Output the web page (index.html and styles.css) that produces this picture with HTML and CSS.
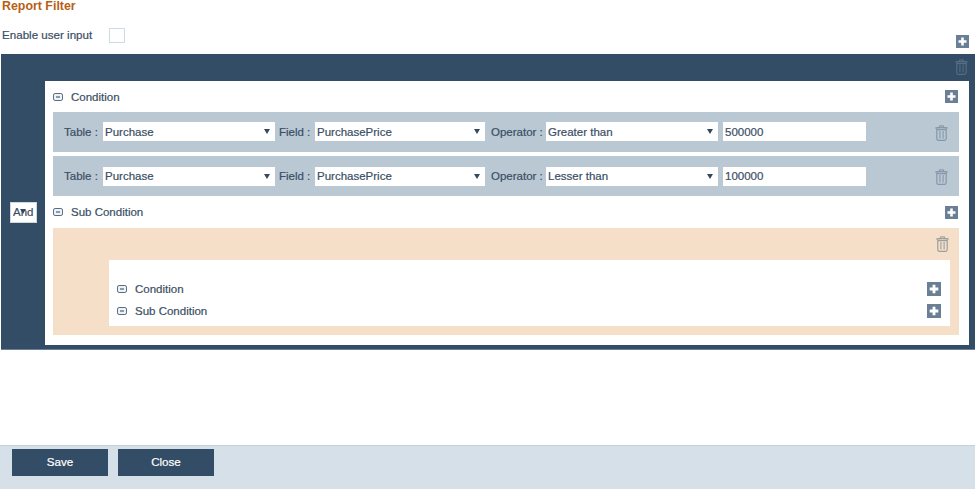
FILE: index.html
```html
<!DOCTYPE html>
<html lang="en">
<head>
<meta charset="utf-8">
<title>Report Filter</title>
<link rel="stylesheet" href="styles.css">
</head>
<body>
<svg class="defs" width="0" height="0" aria-hidden="true">
  <symbol id="plus" viewBox="0 0 13 13">
    <rect width="13" height="13" fill="#6a7f95"/>
    <path d="M6.5 2.5v8M2.5 6.5h8" stroke="#fff" stroke-width="2.6" fill="none"/>
  </symbol>
  <symbol id="minus" viewBox="0 0 10 8">
    <rect x=".5" y=".5" width="9" height="7" rx="1.6" fill="#eef2f5" stroke="#566c82" stroke-width="1"/>
    <path d="M3 4h4" stroke="#4a6076" stroke-width="1.2"/>
  </symbol>
  <symbol id="trash" viewBox="0 0 13 16">
    <path d="M4.5 2V.8h4V2" fill="none" stroke="currentColor" stroke-width="1"/>
    <path d="M.4 3.4C2 2.2 11 2.2 12.6 3.4" fill="none" stroke="currentColor" stroke-width="1.6"/>
    <path d="M1.8 4.6h9.4v9c0 1-.6 1.8-1.6 1.8H3.4c-1 0-1.6-.8-1.6-1.8z" fill="none" stroke="currentColor" stroke-width="1.2"/>
    <path d="M4.9 6v7.6M8.1 6v7.6" stroke="currentColor" stroke-width="1.1"/>
  </symbol>
</svg>
<div class="page">
  <main class="main">
    <h1 class="title">Report Filter</h1>
    <div class="enable">
      <span class="enable-label">Enable user input</span>
      <span class="checkbox"></span>
      <svg class="plus plus-top"><use href="#plus"/></svg>
    </div>
    <section class="panel">
      <div class="panel-head"><svg class="trash trash-dark"><use href="#trash"/></svg></div>
      <div class="panel-body">
        <div class="logic">
          <span class="select-wrap logic-wrap">
            <select class="logic-select"><option>And</option></select>
          </span>
        </div>
        <div class="tree">
          <div class="head head-top">
            <svg class="minus"><use href="#minus"/></svg>
            <span class="head-text">Condition</span>
            <svg class="plus"><use href="#plus"/></svg>
          </div>
          <div class="row row-first">
            <label class="lbl lbl-table">Table :</label>
            <span class="select-wrap w-table"><select class="sel"><option>Purchase</option></select></span>
            <label class="lbl lbl-field">Field :</label>
            <span class="select-wrap w-field"><select class="sel"><option>PurchasePrice</option></select></span>
            <label class="lbl lbl-op">Operator :</label>
            <span class="select-wrap w-op"><select class="sel"><option>Greater than</option></select></span>
            <input class="val" value="500000">
            <svg class="trash trash-row"><use href="#trash"/></svg>
          </div>
          <div class="row">
            <label class="lbl lbl-table">Table :</label>
            <span class="select-wrap w-table"><select class="sel"><option>Purchase</option></select></span>
            <label class="lbl lbl-field">Field :</label>
            <span class="select-wrap w-field"><select class="sel"><option>PurchasePrice</option></select></span>
            <label class="lbl lbl-op">Operator :</label>
            <span class="select-wrap w-op"><select class="sel"><option>Lesser than</option></select></span>
            <input class="val" value="100000">
            <svg class="trash trash-row"><use href="#trash"/></svg>
          </div>
          <div class="head head-sub">
            <svg class="minus"><use href="#minus"/></svg>
            <span class="head-text">Sub Condition</span>
            <svg class="plus"><use href="#plus"/></svg>
          </div>
          <div class="sub">
            <div class="sub-head"><svg class="trash trash-sub"><use href="#trash"/></svg></div>
            <div class="sub-inner">
              <div class="head head-inner">
                <svg class="minus"><use href="#minus"/></svg>
                <span class="head-text">Condition</span>
                <svg class="plus"><use href="#plus"/></svg>
              </div>
              <div class="head head-inner">
                <svg class="minus"><use href="#minus"/></svg>
                <span class="head-text">Sub Condition</span>
                <svg class="plus"><use href="#plus"/></svg>
              </div>
            </div>
          </div>
        </div>
      </div>
    </section>
  </main>
  <footer class="footer">
    <button class="btn">Save</button>
    <button class="btn">Close</button>
  </footer>
</div>
</body>
</html>
```
FILE: styles.css
```css
* { box-sizing: border-box; }
html, body { margin: 0; padding: 0; background: #fff; }
body {
  font-family: "Liberation Sans", Arial, sans-serif;
  font-size: 11.5px;
  color: #3a4e64;
  -webkit-text-stroke: 0.2px #3a4e64;
  overflow: hidden;
}
.defs { display: block; height: 0; }
.page { display: flex; flex-direction: column; height: 489px; }
.main { flex: 1; min-height: 0; }

.title {
  margin: 0;
  padding-left: 2px;
  height: 13px;
  font-size: 12.4px;
  line-height: 12px;
  font-weight: 700;
  color: #b85f17;
  -webkit-text-stroke: 0;
}
.enable {
  display: flex;
  align-items: flex-start;
  height: 26px;
  margin-top: 15px;
  padding: 0 6px 0 2px;
}
.enable-label { width: 107px; font-size: 11.6px; line-height: 14px; }
.checkbox {
  width: 16px;
  height: 15px;
  background: #fff;
  border: 1px solid #cfdae3;
}
.plus-top { margin: 7px 0 0 auto; }
.plus { display: block; width: 13px; height: 13px; flex: none; }
.minus { display: block; width: 10px; height: 8px; flex: none; }
.trash { display: block; width: 13px; height: 16px; flex: none; }
.trash-dark { color: #566d82; }
.trash-row { color: #8597a8; }
.trash-sub { color: #9c9fa0; }

.panel {
  margin-left: 1px;
  height: 296px;
  background: #334d66;
  border-bottom: 1px solid #6d8093;
  display: flex;
  flex-direction: column;
}
.panel-head {
  height: 27px;
  flex: none;
  display: flex;
  justify-content: flex-end;
  padding: 5px 7px 0 0;
}
.panel-body { display: flex; height: 264px; margin-right: 6px; }
.logic {
  width: 44px;
  flex: none;
  display: flex;
  align-items: center;
  padding-left: 9px;
  padding-bottom: 2px;
}
.select-wrap { position: relative; display: block; flex: none; }
.select-wrap::after {
  content: "";
  position: absolute;
  right: 5px;
  top: 7px;
  border-left: 3px solid transparent;
  border-right: 3px solid transparent;
  border-top: 5px solid #34495e;
}
.logic-wrap { width: 27px; height: 21px; }
.logic-wrap::after { right: 11px; top: 7px; }
.logic-select, .sel {
  appearance: none;
  -webkit-appearance: none;
  display: block;
  width: 100%;
  height: 100%;
  margin: 0;
  background: #fff;
  font: inherit;
  color: inherit;
  outline: none;
}
.logic-select {
  border: 1px solid #cfd8e0;
  border-radius: 0;
  padding: 0 0 0 2px;
}
.sel { border: 0; border-radius: 0; padding: 0 0 0 2px; }

.tree { flex: 1; background: #fff; padding: 0 10px 10px 8px; }
.head {
  display: flex;
  align-items: center;
}
.head-text { flex: 1; margin-left: 8px; }
.head-top { height: 31px; }
.head-sub { height: 32px; }
.head .plus { margin-right: 1px; }

.row {
  height: 40px;
  margin-bottom: 4px;
  background: #b9c8d3;
  display: flex;
  align-items: center;
  padding-left: 11px;
}
.row-first { padding-bottom: 1px; }
.row + .head-sub { margin-top: -4px; }
.lbl { flex: none; }
.lbl-table { width: 39px; }
.lbl-field { width: 36px; margin-left: 4px; }
.lbl-op { width: 55px; margin-left: 6px; }
.w-table, .w-field, .w-op { height: 19px; }
.w-table { width: 172px; }
.w-field { width: 170px; }
.w-op { width: 172px; }
.val {
  flex: none;
  width: 143px;
  height: 19px;
  margin: 0 0 0 5px;
  padding: 0 0 0 2px;
  border: 0;
  border-radius: 0;
  background: #fff;
  font: inherit;
  color: inherit;
  outline: none;
}
.trash-row { margin-left: 69px; margin-top: 2px; }

.sub { height: 107px; background: #f6dfc8; padding: 0 9px 9px 56px; }
.sub-head {
  height: 32px;
  display: flex;
  justify-content: flex-end;
  padding: 8px 1px 0 0;
}
.sub-inner { height: 66px; background: #fff; padding: 18px 8px 0 8px; }
.head-inner { height: 22px; }
.head-inner .plus { width: 14px; height: 14px; }

.footer {
  flex: none;
  height: 44px;
  background: #d5e0e8;
  border-top: 1px solid #c3d1dc;
  display: flex;
  gap: 10px;
  padding: 3px 0 0 12px;
  align-items: flex-start;
}
.btn {
  width: 96px;
  height: 27px;
  background: #334d66;
  border: 0;
  border-radius: 0;
  color: #fff;
  -webkit-text-stroke: 0.2px #fff;
  font: 11.6px "Liberation Sans", Arial, sans-serif;
  padding: 0 0 2px;
}
```
